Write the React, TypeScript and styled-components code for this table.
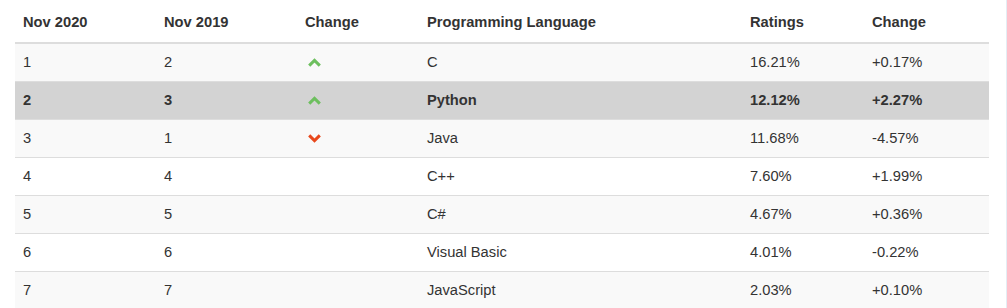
import React from "react";
import styled, { createGlobalStyle } from "styled-components";

const Global = createGlobalStyle`
  *, *::before, *::after { box-sizing: border-box; }
  html, body { margin: 0; padding: 0; background: #fff; }
  body { font-family: "Liberation Sans", Arial, sans-serif; font-size: 14.7px; color: #333; }
`;

const Page = styled.div`
  width: 1007px;
  height: 308px;
  padding-left: 15px;
  border-right: 1px solid #e4edf4;
  overflow: hidden;
`;

const Table = styled.table`
  width: 974px;
  border-collapse: collapse;
  border-spacing: 0;
  table-layout: fixed;
`;

const Th = styled.th<{ $w: number }>`
  width: ${(p) => p.$w}px;
  text-align: left;
  font-weight: bold;
  padding: 12px 8px 9px;
  line-height: 21px;
  border-bottom: 2px solid #ddd;
  white-space: nowrap;
`;

const Tr = styled.tr<{ $striped: boolean; $highlight: boolean }>`
  background: ${(p) => (p.$highlight ? "#d3d3d3" : p.$striped ? "#f9f9f9" : "#fff")};
  font-weight: ${(p) => (p.$highlight ? "bold" : "normal")};
`;

const Td = styled.td`
  padding: 8px;
  height: 38px;
  line-height: 21px;
  border-top: 1px solid #ddd;
  vertical-align: top;
  white-space: nowrap;
`;

const ArrowBox = styled.span`
  display: flex;
  align-items: center;
  height: 21px;
  padding-left: 3px;
`;

const Chevron: React.FC<{ dir: "up" | "down" }> = ({ dir }) => (
  <svg width="13" height="9" viewBox="0 0 13 9" style={{ display: "block" }}>
    <path
      d={dir === "up" ? "M1.2 7.6 L6.5 2.4 L11.8 7.6" : "M1.2 1.4 L6.5 6.6 L11.8 1.4"}
      fill="none"
      stroke={dir === "up" ? "#6dbf5e" : "#e8481c"}
      strokeWidth="3"
      strokeLinecap="butt"
      strokeLinejoin="miter"
    />
  </svg>
);

type Row = { now: number; prev: number; dir?: "up" | "down"; lang: string; rating: string; change: string };

const rows: Row[] = [
  { now: 1, prev: 2, dir: "up", lang: "C", rating: "16.21%", change: "+0.17%" },
  { now: 2, prev: 3, dir: "up", lang: "Python", rating: "12.12%", change: "+2.27%" },
  { now: 3, prev: 1, dir: "down", lang: "Java", rating: "11.68%", change: "-4.57%" },
  { now: 4, prev: 4, lang: "C++", rating: "7.60%", change: "+1.99%" },
  { now: 5, prev: 5, lang: "C#", rating: "4.67%", change: "+0.36%" },
  { now: 6, prev: 6, lang: "Visual Basic", rating: "4.01%", change: "-0.22%" },
  { now: 7, prev: 7, lang: "JavaScript", rating: "2.03%", change: "+0.10%" },
];

export default function App() {
  return (
    <Page>
      <Global />
      <Table>
        <thead>
          <tr>
            <Th $w={141}>Nov 2020</Th>
            <Th $w={141}>Nov 2019</Th>
            <Th $w={122}>Change</Th>
            <Th $w={323}>Programming Language</Th>
            <Th $w={122}>Ratings</Th>
            <Th $w={125}>Change</Th>
          </tr>
        </thead>
        <tbody>
          {rows.map((r, i) => (
            <Tr key={r.now} $striped={i % 2 === 0} $highlight={r.lang === "Python"}>
              <Td>{r.now}</Td>
              <Td>{r.prev}</Td>
              <Td>{r.dir ? <ArrowBox><Chevron dir={r.dir} /></ArrowBox> : null}</Td>
              <Td>{r.lang}</Td>
              <Td>{r.rating}</Td>
              <Td>{r.change}</Td>
            </Tr>
          ))}
        </tbody>
      </Table>
    </Page>
  );
}
